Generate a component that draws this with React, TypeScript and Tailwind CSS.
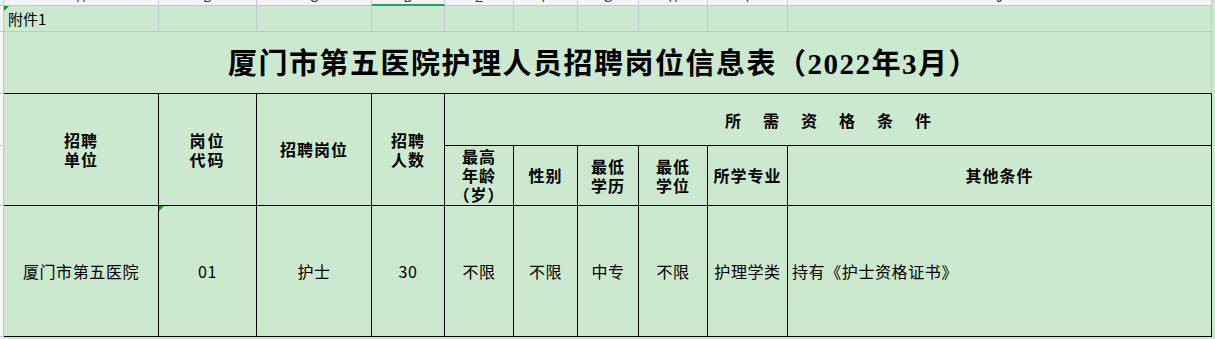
const letters = ["A", "B", "C", "D", "E", "F", "G", "H", "I", "J"];

const light = "border-r border-b border-[#c3c6d6]";
const dark = "border-r border-b border-black";
const head = `${dark} flex items-center justify-center text-center text-[16px] font-bold leading-[19px] tracking-[1px]`;
const cell = `${dark} flex items-center justify-center text-[16px] tracking-[0.6px]`;

function Corner() {
  return (
    <span className="absolute top-0 left-0 h-0 w-0 border-t-[5px] border-r-[5px] border-t-[#1e8f1e] border-r-transparent" />
  );
}

export default function App() {
  const subs = [
    ["最高", "年龄", "（岁）"],
    ["性别"],
    ["最低", "学历"],
    ["最低", "学位"],
    ["所学专业"],
    ["其他条件"],
  ];
  const data = ["不限", "不限", "中专", "不限", "护理学类"];

  return (
    <div className="flex h-[339px] w-[1215px] overflow-hidden bg-[#cce8cf] font-['Noto_Sans_CJK_SC',sans-serif] text-black">
      {/* row header strip on the left */}
      <div className="flex w-[4px] shrink-0 flex-col border-r border-[#c3c6d6] bg-[#f4f5f9]">
        <div className="h-[6px] border-b border-[#c3c6d6]" />
        <div className="h-[26px] border-b border-[#c3c6d6]" />
        <div className="h-[62px] border-b border-[#c3c6d6]" />
        <div className="h-[52px] border-b border-[#c3c6d6]" />
        <div className="h-[60px] border-b border-[#c3c6d6]" />
        <div className="h-[131px] border-b border-[#c3c6d6]" />
      </div>

      <div className="grid shrink-0 grid-cols-[155px_98px_115px_73px_69px_64px_61px_69px_80px_424px] grid-rows-[6px_26px_62px_52px_60px_131px]">
        {/* column letters, mostly scrolled out of view */}
        {letters.map((l) => (
          <div
            key={l}
            className={`flex justify-center overflow-hidden border-r border-[#c3c6d6] bg-[#f4f5f9] ${
              l === "D" ? "border-b-2 border-b-[#21a366]" : "border-b"
            }`}
          >
            <span className="-mt-[8px] font-['Liberation_Sans',sans-serif] text-[12px] leading-[13px] text-[#333]">{l}</span>
          </div>
        ))}

        {/* 附件1 row */}
        {letters.map((l, i) => (
          <div key={"r1" + l} className={`${light} relative flex items-center`}>
            {i === 0 && (
              <>
                <Corner />
                <span className="pl-[4px] text-[15px] leading-none">附件1</span>
              </>
            )}
          </div>
        ))}

        {/* title */}
        <div className="col-span-10 flex items-center justify-center border-r border-b border-r-[#c3c6d6] border-b-black pt-[4px] pr-[8px]">
          <h1 className="font-['Liberation_Serif','Noto_Sans_CJK_SC',serif] text-[29px] leading-none font-bold tracking-[1.5px]">
            厦门市第五医院护理人员招聘岗位信息表（2022年3月）
          </h1>
        </div>

        {/* header */}
        <div className={`${head} row-span-2`}>招聘<br />单位</div>
        <div className={`${head} row-span-2 tracking-[2px]`}>岗位<br />代码</div>
        <div className={`${head} row-span-2`}>招聘岗位</div>
        <div className={`${head} row-span-2`}>招聘<br />人数</div>
        <div className={`${dark} col-span-6 flex items-center justify-center gap-[22px] text-[16px] font-bold`}>
          {["所", "需", "资", "格", "条", "件"].map((c) => (
            <span key={c}>{c}</span>
          ))}
        </div>
        {subs.map((s, i) => (
          <div key={"s" + i} className={head}>
            <div>
              {s.map((t) => (
                <div key={t}>{t}</div>
              ))}
            </div>
          </div>
        ))}

        {/* data row */}
        <div className={cell}>厦门市第五医院</div>
        <div className={`${cell} relative`}>
          <Corner />
          01
        </div>
        <div className={cell}>护士</div>
        <div className={cell}>30</div>
        {data.map((d, i) => (
          <div key={"d" + i} className={cell}>{d}</div>
        ))}
        <div className={`${dark} flex items-center pl-[4px] text-[16px] tracking-[0.6px]`}>持有《护士资格证书》</div>
      </div>
    </div>
  );
}
